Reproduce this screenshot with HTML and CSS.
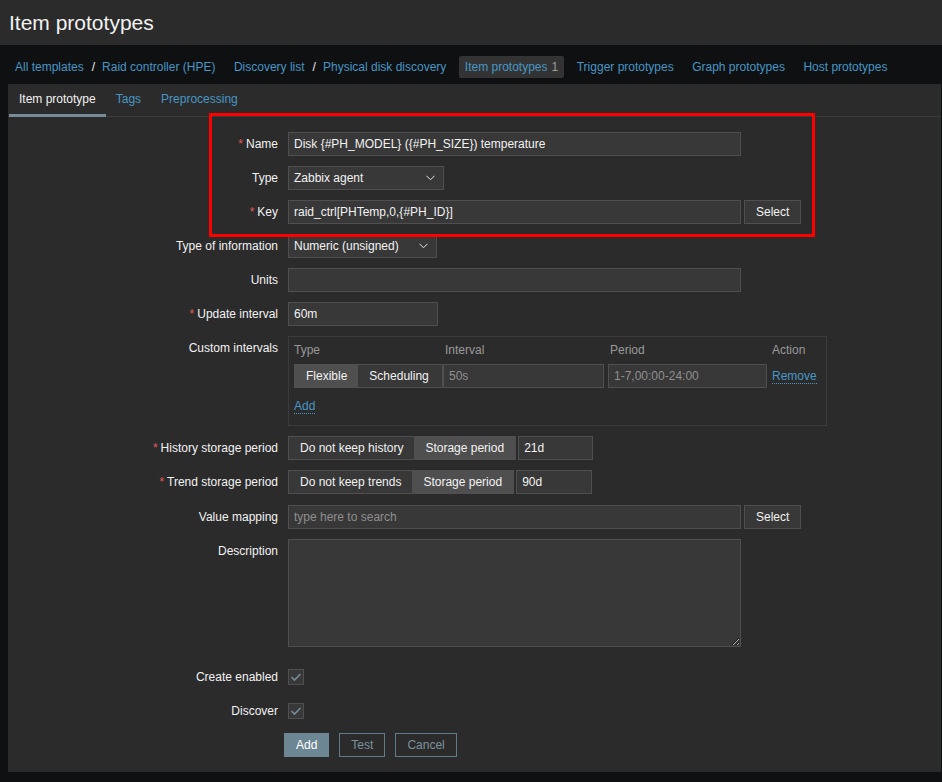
FILE: index.html
```html
<!DOCTYPE html>
<html lang="en">
<head>
<meta charset="utf-8">
<title>Item prototypes</title>
<link rel="stylesheet" href="styles.css">
</head>
<body>
<header class="page-header">
  <h1 class="page-title">Item prototypes</h1>
</header>

<nav class="breadcrumbs">
  <div class="crumb-group">
    <a class="crumb">All templates</a><span class="crumb-sep">/</span><a class="crumb">Raid controller (HPE)</a>
  </div>
  <div class="crumb-group">
    <a class="crumb">Discovery list</a><span class="crumb-sep">/</span><a class="crumb">Physical disk discovery</a>
  </div>
  <a class="crumb crumb-selected">Item prototypes<span class="count">1</span></a>
  <a class="crumb">Trigger prototypes</a>
  <a class="crumb">Graph prototypes</a>
  <a class="crumb">Host prototypes</a>
</nav>

<main class="panel">
  <ul class="tabs">
    <li><a class="tab tab-active">Item prototype</a></li>
    <li><a class="tab">Tags</a></li>
    <li><a class="tab">Preprocessing</a></li>
  </ul>

  <form class="form-grid">
    <label class="form-label"><span class="req">*</span>Name</label>
    <div class="field"><input class="input w-wide" type="text" value="Disk {#PH_MODEL} ({#PH_SIZE}) temperature"></div>

    <label class="form-label">Type</label>
    <div class="field">
      <div class="select w-type"><span>Zabbix agent</span><svg class="chev" width="9" height="6" viewBox="0 0 9 6"><polyline points="0.5,0.8 4.5,4.8 8.5,0.8" fill="none" stroke="#e6e6e6" stroke-width="1"/></svg></div>
    </div>

    <label class="form-label"><span class="req">*</span>Key</label>
    <div class="field row-inline">
      <input class="input w-wide" type="text" value="raid_ctrl[PHTemp,0,{#PH_ID}]">
      <button class="btn-grey" type="button">Select</button>
    </div>

    <label class="form-label">Type of information</label>
    <div class="field">
      <div class="select w-info"><span>Numeric (unsigned)</span><svg class="chev" width="9" height="6" viewBox="0 0 9 6"><polyline points="0.5,0.8 4.5,4.8 8.5,0.8" fill="none" stroke="#e6e6e6" stroke-width="1"/></svg></div>
    </div>

    <label class="form-label">Units</label>
    <div class="field"><input class="input w-wide" type="text" value=""></div>

    <label class="form-label"><span class="req">*</span>Update interval</label>
    <div class="field"><input class="input w-interval" type="text" value="60m"></div>

    <label class="form-label">Custom intervals</label>
    <div class="field">
      <div class="ci-box">
        <div class="ci-table">
          <div class="ci-head ci-head-first">Type</div>
          <div class="ci-head">Interval</div>
          <div class="ci-head">Period</div>
          <div class="ci-head ci-head-first">Action</div>
          <div class="segmented">
            <span class="seg seg-on">Flexible</span><span class="seg">Scheduling</span>
          </div>
          <input class="input ci-interval" type="text" placeholder="50s">
          <input class="input ci-period" type="text" placeholder="1-7,00:00-24:00">
          <a class="link-dotted ci-action">Remove</a>
        </div>
        <a class="link-dotted ci-add">Add</a>
      </div>
    </div>

    <label class="form-label"><span class="req">*</span>History storage period</label>
    <div class="field row-inline gap2">
      <div class="segmented">
        <span class="seg">Do not keep history</span><span class="seg seg-on">Storage period</span>
      </div>
      <input class="input w-hist" type="text" value="21d">
    </div>

    <label class="form-label"><span class="req">*</span>Trend storage period</label>
    <div class="field row-inline gap2">
      <div class="segmented">
        <span class="seg">Do not keep trends</span><span class="seg seg-on">Storage period</span>
      </div>
      <input class="input w-trend" type="text" value="90d">
    </div>

    <label class="form-label shift-1">Value mapping</label>
    <div class="field row-inline shift-1">
      <input class="input w-wide" type="text" placeholder="type here to search">
      <button class="btn-grey" type="button">Select</button>
    </div>

    <label class="form-label">Description</label>
    <div class="field field-desc"><textarea class="textarea"></textarea></div>

    <label class="form-label">Create enabled</label>
    <div class="field field-check">
      <span class="checkbox"><svg width="12" height="10" viewBox="0 0 12 10"><polyline points="1.5,5 4.5,8 10.5,2" fill="none" stroke="#768d99" stroke-width="1.6"/></svg></span>
    </div>

    <label class="form-label">Discover</label>
    <div class="field field-check">
      <span class="checkbox"><svg width="12" height="10" viewBox="0 0 12 10"><polyline points="1.5,5 4.5,8 10.5,2" fill="none" stroke="#768d99" stroke-width="1.6"/></svg></span>
    </div>

    <div class="form-label"></div>
    <div class="field form-buttons">
      <button class="btn-main" type="button">Add</button>
      <button class="btn-alt" type="button">Test</button>
      <button class="btn-alt" type="button">Cancel</button>
    </div>
  </form>

  <div class="highlight"></div>
</main>
</body>
</html>
```

FILE: styles.css
```css
* {
  box-sizing: border-box;
}

html,
body {
  margin: 0;
  padding: 0;
  height: 100%;
}

body {
  background: #0e1012;
  color: #f2f2f2;
  font-family: "Liberation Sans", Arial, sans-serif;
  font-size: 12px;
  line-height: 1.2;
}

/* ---------- header ---------- */
.page-header {
  height: 45px;
  background: #2b2b2b;
  padding-left: 9px;
}

.page-title {
  margin: 0;
  font-size: 21px;
  font-weight: normal;
  line-height: 45px;
  color: #f2f2f2;
}

/* ---------- breadcrumbs ---------- */
.breadcrumbs {
  display: flex;
  align-items: center;
  gap: 6.5px;
  height: 39px;
  padding: 11px 0 6px 9px;
}

.crumb-group {
  display: flex;
  align-items: center;
}

.crumb {
  display: block;
  padding: 0 6px;
  line-height: 22px;
  color: #4796c4;
  text-decoration: none;
  white-space: nowrap;
}

.crumb-sep {
  padding: 0 1px 0 2px;
  color: #f2f2f2;
}

.crumb-selected {
  background: #333333;
  border-radius: 2px;
}

.count {
  color: #9a9a9a;
  margin-left: 4px;
}

/* ---------- panel ---------- */
.panel {
  position: relative;
  margin: 0 1px 0 8px;
  background: #2b2b2b;
}

.tabs {
  display: flex;
  margin: 0;
  padding: 0 0 0 1px;
  list-style: none;
  border-bottom: 1px solid #3b3b3b;
}

.tab {
  display: block;
  padding: 0 10px;
  line-height: 30px;
  border-bottom: 3px solid transparent;
  margin-bottom: -1px;
  color: #4796c4;
  cursor: pointer;
}

.tab-active {
  color: #f2f2f2;
  border-bottom-color: #768d99;
}

/* ---------- form ---------- */
.form-grid {
  display: grid;
  grid-template-columns: 270px 1fr;
  column-gap: 10px;
  row-gap: 10px;
  padding: 15px 0 15px 0;
}

.form-label {
  text-align: right;
  line-height: 24px;
  color: #f2f2f2;
  white-space: nowrap;
}

.req {
  color: #e45959;
  margin-right: 3px;
}

.field {
  min-height: 24px;
}

.shift-1 {
  margin-top: 1px;
}

.row-inline {
  display: flex;
  gap: 3px;
}

.gap2 {
  gap: 2px;
}

.input {
  height: 24px;
  padding: 0 5px;
  background: #383838;
  border: 1px solid #4f4f4f;
  color: #f2f2f2;
  font-family: "Liberation Sans", Arial, sans-serif;
  font-size: 12px;
  outline: none;
}

.input::placeholder {
  color: #8f8f8f;
}

.w-wide {
  width: 453px;
}

.w-interval {
  width: 150px;
}

.w-hist {
  width: 75px;
}

.w-trend {
  width: 76px;
}

.select {
  display: flex;
  align-items: center;
  justify-content: space-between;
  height: 24px;
  padding: 0 8px 0 5px;
  background: #383838;
  border: 1px solid #4f4f4f;
  color: #f2f2f2;
}

.w-type {
  width: 156px;
}

.w-info {
  width: 149px;
}

.chev {
  display: block;
}

.btn-grey {
  height: 24px;
  padding: 0 11px;
  background: #383838;
  border: 1px solid #4f4f4f;
  color: #f2f2f2;
  font-family: "Liberation Sans", Arial, sans-serif;
  font-size: 12px;
}

/* custom intervals */
.ci-box {
  width: 539px;
  border: 1px solid #3b3b3b;
  padding: 6px 5px 11px 5px;
}

.ci-table {
  display: grid;
  grid-template-columns: 149px 165px 164px auto;
  column-gap: 0;
  row-gap: 7px;
  align-items: center;
}

.ci-head {
  line-height: 14px;
  color: #999999;
  padding-left: 2px;
}

.ci-head-first {
  padding-left: 0;
}

.ci-interval {
  width: 161px;
}

.ci-period {
  width: 159px;
}

.ci-action {
  justify-self: start;
}

.link-dotted {
  color: #4796c4;
  border-bottom: 1px dotted #4796c4;
  line-height: 14px;
  cursor: pointer;
}

.ci-add {
  display: inline-block;
  margin-top: 11px;
}

.segmented {
  display: inline-flex;
  height: 24px;
  border: 1px solid #4f4f4f;
  background: #383838;
}

.seg {
  padding: 0 11px;
  line-height: 22px;
  color: #f2f2f2;
  white-space: nowrap;
}

.seg-on {
  background: #4f4f4f;
}

/* description */
.field-desc {
  margin-bottom: 8px;
}

.textarea {
  display: block;
  width: 453px;
  height: 108px;
  background: #383838;
  border: 1px solid #4f4f4f;
  color: #f2f2f2;
  font-family: "Liberation Sans", Arial, sans-serif;
  font-size: 12px;
  padding: 4px 5px;
  resize: both;
  outline: none;
}

/* checkboxes */
.field-check {
  display: flex;
  align-items: center;
}

.checkbox {
  display: flex;
  align-items: center;
  justify-content: center;
  width: 16px;
  height: 16px;
  background: #383838;
  border: 1px solid #4f4f4f;
}

/* buttons */
.form-buttons {
  display: flex;
  gap: 10px;
  margin-left: -4px;
}

.btn-main,
.btn-alt {
  height: 24px;
  padding: 0 11px;
  font-family: "Liberation Sans", Arial, sans-serif;
  font-size: 12px;
  border: 1px solid #6d8694;
}

.btn-main {
  background: #6d8694;
  color: #ffffff;
}

.btn-alt {
  background: transparent;
  color: #7d919c;
  border-color: #617a88;
}

/* annotation overlay */
.highlight {
  position: absolute;
  left: 201px;
  top: 29px;
  width: 606px;
  height: 124px;
  border: 3px solid #ff0000;
  pointer-events: none;
}
```
